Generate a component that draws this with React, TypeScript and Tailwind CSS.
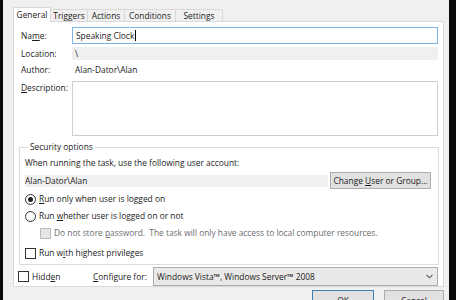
import React from "react";

const U = ({ children }: { children: React.ReactNode }) => (
  <span className="underline underline-offset-[1px]">{children}</span>
);

const Radio = ({ checked }: { checked?: boolean }) => (
  <span className="w-[11px] h-[11px] rounded-full border border-[#333] bg-white flex items-center justify-center shrink-0">
    {checked && <span className="w-[5px] h-[5px] rounded-full bg-[#222]" />}
  </span>
);

const Check = ({ disabled }: { disabled?: boolean }) => (
  <span
    className={
      disabled
        ? "w-[11px] h-[11px] border border-[#bcbcbc] bg-[#e6e6e6] shrink-0"
        : "w-[11px] h-[11px] border border-[#333] bg-white shrink-0"
    }
  />
);

export default function App() {
  return (
    <div className="w-[456px] h-[300px] flex bg-[#0b0b0b] overflow-hidden font-['Open_Sans',sans-serif] text-[8.4px] leading-[12px] text-[#1b1b1b]">
      <div className="w-[3px] shrink-0" />
      <div className="w-[446px] shrink-0 bg-[#f0f0f0] flex flex-col pt-[7px] pl-[10px]">
        {/* Tabs */}
        <div className="flex items-end h-[15px] -mb-[1px] relative z-10">
          <div className="w-[38px] h-[15px] bg-white border border-b-0 border-[#d9d9d9] flex items-center justify-center pb-[1px]">
            General
          </div>
          <div className="w-[37px] h-[13px] bg-[#f0f0f0] border border-l-0 border-[#d9d9d9] flex items-center justify-center">
            Triggers
          </div>
          <div className="w-[37px] h-[13px] bg-[#f0f0f0] border border-l-0 border-[#d9d9d9] flex items-center justify-center">
            Actions
          </div>
          <div className="w-[51px] h-[13px] bg-[#f0f0f0] border border-l-0 border-[#d9d9d9] flex items-center justify-center">
            Conditions
          </div>
          <div className="w-[47px] h-[13px] bg-[#f0f0f0] border border-l-0 border-[#d9d9d9] flex items-center justify-center">
            Settings
          </div>
        </div>

        {/* Panel */}
        <div className="w-[431px] h-[268px] bg-white border border-[#d9d9d9] flex flex-col">
          {/* Name */}
          <div className="mt-[5px] h-[17px] flex items-center">
            <div className="w-[51px] ml-[7px] shrink-0">
              Na<U>m</U>e:
            </div>
            <div className="w-[366px] h-[17px] border border-[#7eb4ea] bg-white flex items-center pl-[3px]">
              <span>Speaking Clock</span>
              <span className="w-[1px] h-[11px] bg-black ml-[1px]" />
            </div>
          </div>
          {/* Location */}
          <div className="mt-[3px] h-[13px] flex items-center">
            <div className="w-[51px] ml-[7px] shrink-0">Location:</div>
            <div className="w-[366px] h-[13px] bg-[#f0f0f0] flex items-center pl-[3px]">\</div>
          </div>
          {/* Author */}
          <div className="mt-[3px] h-[14px] flex items-center">
            <div className="w-[51px] ml-[7px] shrink-0">Author:</div>
            <div className="pl-[3px]">Alan-Dator\Alan</div>
          </div>
          {/* Description */}
          <div className="mt-[4px] flex items-start">
            <div className="w-[51px] ml-[7px] shrink-0 pt-[1px]">
              <U>D</U>escription:
            </div>
            <div className="w-[366px] h-[55px] border border-[#cfcfcf] bg-white" />
          </div>

          {/* Security options */}
          <fieldset className="mt-[5px] ml-[5px] w-[420px] border border-[#dcdcdc] pl-[5px] pr-[6px] pb-[4px] flex flex-col">
            <legend className="ml-[3px] px-[2px] leading-[12px]">Security options</legend>
            <div className="mt-[4px] h-[12px] flex items-center">
              <span>When running the task, use the following user account:</span>
            </div>
            <div className="mt-[3px] h-[17px] flex items-center">
              <div className="w-[303px] h-[12px] bg-[#f0f0f0] flex items-center">
                <span>Alan-Dator\Alan</span>
              </div>
              <div className="ml-[2px] w-[101px] h-[17px] bg-[#e1e1e1] border border-[#adadad] flex items-center justify-center">
                <span>
                  Change <U>U</U>ser or Group...
                </span>
              </div>
            </div>
            <div className="mt-[3px] h-[14px] flex items-center gap-[3px]">
              <Radio checked />
              <span>
                <U>R</U>un only when user is logged on
              </span>
            </div>
            <div className="mt-[3px] h-[14px] flex items-center gap-[3px]">
              <Radio />
              <span>
                Run <U>w</U>hether user is logged on or not
              </span>
            </div>
            <div className="mt-[3px] h-[14px] flex items-center gap-[3px] pl-[15px] text-[#6d6d6d]">
              <Check disabled />
              <span className="whitespace-pre">
                Do not store <U>p</U>assword.  The task will only have access to local computer resources.
              </span>
            </div>
            <div className="mt-[6px] h-[14px] flex items-center gap-[3px]">
              <Check />
              <span>
                Run w<U>i</U>th highest privileges
              </span>
            </div>
          </fieldset>

          {/* Hidden / Configure */}
          <div className="mt-[2px] h-[19px] flex items-center">
            <div className="ml-[4px] flex items-center gap-[3px] w-[75px]">
              <Check />
              <span>
                Hidd<U>e</U>n
              </span>
            </div>
            <div className="w-[60px]">
              <U>C</U>onfigure for:
            </div>
            <div className="w-[285px] h-[19px] bg-[#e9e9e9] border border-[#acacac] flex items-center pl-[3px] pr-[4px]">
              <span className="flex-1">Windows Vista™, Windows Server™ 2008</span>
              <svg width="7" height="5" viewBox="0 0 7 5">
                <path d="M0.5 0.8 L3.5 3.8 L6.5 0.8" fill="none" stroke="#5a5a5a" strokeWidth="1.1" />
              </svg>
            </div>
          </div>
        </div>

        {/* Bottom buttons */}
        <div className="mt-[3px] flex justify-end pr-[5px] gap-[10px]">
          <div className="w-[62px] h-[21px] bg-[#e1e1e1] border border-[#3c7fb1] flex items-center justify-center">
            <span>OK</span>
          </div>
          <div className="w-[60px] h-[21px] bg-[#e1e1e1] border border-[#adadad] flex items-center justify-center">
            <span>Cancel</span>
          </div>
        </div>
      </div>
      <div className="flex-1" />
    </div>
  );
}
